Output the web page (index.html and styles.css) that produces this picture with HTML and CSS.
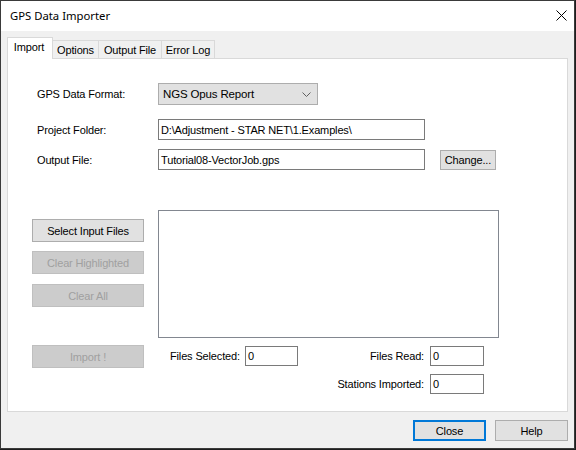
FILE: index.html
```html
<!DOCTYPE html>
<html>
<head>
<meta charset="utf-8">
<title>GPS Data Importer</title>
<link rel="stylesheet" href="styles.css">
</head>
<body>
<div class="window">
  <div class="titlebar">
    <span class="title">GPS Data Importer</span>
    <svg class="close-x" width="11" height="11" viewBox="0 0 11 11"><path d="M0.5 0.5 L10.5 10.5 M10.5 0.5 L0.5 10.5" stroke="#000" stroke-width="1" fill="none"/></svg>
  </div>
  <div class="client">
    <div class="tabs">
      <div class="tab selected">Import</div>
      <div class="tab t-options">Options</div>
      <div class="tab t-output">Output File</div>
      <div class="tab t-error">Error Log</div>
    </div>
    <div class="panel">
      <div class="form-top">
        <div class="row row1">
          <span class="label">GPS Data Format:</span>
          <div class="combo"><span>NGS Opus Report</span>
            <svg class="chev" width="9" height="5" viewBox="0 0 9 5"><path d="M0.5 0.5 L4.5 4.5 L8.5 0.5" stroke="#606060" stroke-width="1" fill="none"/></svg>
          </div>
        </div>
        <div class="row row2">
          <span class="label">Project Folder:</span>
          <div class="textbox wide">D:\Adjustment - STAR NET\1.Examples\</div>
        </div>
        <div class="row row3">
          <span class="label">Output File:</span>
          <div class="textbox wide">Tutorial08-VectorJob.gps</div>
          <div class="btn change">Change...</div>
        </div>
      </div>
      <div class="lower">
        <div class="side-buttons">
          <div class="btn side b1">Select Input Files</div>
          <div class="btn side disabled b2">Clear Highlighted</div>
          <div class="btn side disabled b3">Clear All</div>
        </div>
        <div class="listbox"></div>
      </div>
      <div class="stats">
        <div class="btn side disabled">Import !</div>
        <span class="label sel-label">Files Selected:</span>
        <div class="textbox small sel-box">0</div>
        <div class="counts">
          <span class="clabel">Files Read:</span>
          <div class="textbox small2">0</div>
          <span class="clabel">Stations Imported:</span>
          <div class="textbox small2">0</div>
        </div>
      </div>
    </div>
    <div class="footer">
      <div class="btn dlg default">Close</div>
      <div class="btn dlg">Help</div>
    </div>
  </div>
</div>
</body>
</html>
```
FILE: styles.css
```css
* { box-sizing: border-box; }
html, body { margin: 0; padding: 0; }
body {
  background: #1e1e1e;
  width: 576px;
  height: 450px;
  overflow: hidden;
  font-family: "Liberation Sans", Arial, sans-serif;
  font-size: 11px;
  letter-spacing: -0.15px;
  color: #000;
}
.window {
  width: 575px;
  height: 449px;
  border: 1px solid #3a3a3a;
  background: #f0f0f0;
  display: flex;
  flex-direction: column;
}
.titlebar {
  height: 30px;
  background: #fff;
  display: flex;
  align-items: center;
  padding-left: 9px;
  flex: none;
}
.title {
  font-family: "Noto Sans", "Open Sans", sans-serif;
  font-size: 11.3px;
  letter-spacing: 0;
  color: #000;
  flex: 1;
  position: relative;
  top: -1px;
}
.close-x { margin-right: 7px; margin-top: -1px; }
.client {
  flex: 1;
  padding: 6px 6px 0 6px;
  display: flex;
  flex-direction: column;
}
.tabs {
  height: 21px;
  display: flex;
  align-items: flex-end;
  flex: none;
}
.tab {
  height: 18px;
  border: 1px solid #d9d9d9;
  border-bottom: none;
  background: #f0f0f0;
  margin-left: -1px;
  display: flex;
  justify-content: center;
  padding-top: 3px;
  white-space: nowrap;
}
.tab.selected {
  margin-left: 0;
  width: 46px;
  height: 22px;
  margin-bottom: -1px;
  background: #fff;
  position: relative;
  z-index: 2;
  padding-top: 3px;
  padding-right: 2px;
}
.t-options { width: 47px; }
.t-output { width: 64px; }
.t-error { width: 54px; }
.panel {
  height: 354px;
  background: #fff;
  border: 1px solid #d9d9d9;
  flex: none;
}
.form-top { padding-left: 29px; }
.row { display: flex; align-items: center; }
.row1 { margin-top: 24px; height: 22px; }
.row2 { margin-top: 14px; height: 21px; }
.row3 { margin-top: 9px; height: 21px; }
.label { width: 121px; flex: none; white-space: nowrap; }
.combo {
  width: 160px;
  height: 22px;
  background: #e1e1e1;
  border: 1px solid #adadad;
  display: flex;
  align-items: center;
  justify-content: space-between;
  padding-left: 4px;
  padding-right: 6px;
  font-size: 11.5px;
}
.chev { margin-top: 1px; }
.textbox {
  border: 1px solid #7a7a7a;
  background: #fff;
  height: 21px;
  display: flex;
  align-items: center;
  padding-left: 2px;
  white-space: nowrap;
  overflow: hidden;
}
.textbox.wide { width: 267px; }
.btn {
  background: #e1e1e1;
  border: 1px solid #adadad;
  display: flex;
  align-items: center;
  justify-content: center;
  white-space: nowrap;
}
.btn.change { width: 56px; height: 20px; margin-left: 15px; margin-top: 1px; }
.lower {
  margin-top: 40px;
  display: flex;
  height: 128px;
}
.side-buttons {
  margin-left: 24px;
  width: 112px;
  padding-top: 9px;
  display: flex;
  flex-direction: column;
}
.btn.side { width: 112px; height: 23px; flex: none; }
.b2 { margin-top: 9px; }
.b3 { margin-top: 10px; }
.btn.disabled {
  background: #cccccc;
  border-color: #bfbfbf;
  color: #a0a0a0;
}
.listbox {
  margin-left: 14px;
  width: 341px;
  height: 128px;
  border: 1px solid #828790;
  background: #fff;
}
.stats {
  margin-top: 7px;
  display: flex;
  align-items: flex-start;
  padding-left: 24px;
}
.sel-label {
  width: 75px;
  margin-left: 26px;
  height: 20px;
  margin-top: 1px;
  display: flex;
  align-items: center;
}
.textbox.small { width: 53px; height: 20px; margin-top: 1px; }
.counts {
  margin-left: 43px;
  margin-top: 1px;
  display: grid;
  grid-template-columns: 89px 54px;
  grid-auto-rows: 20px;
  row-gap: 8px;
}
.clabel {
  display: flex;
  align-items: center;
  justify-content: flex-end;
  padding-right: 6px;
  white-space: nowrap;
}
.textbox.small2 { width: 54px; height: 20px; }
.footer {
  margin-top: 8px;
  display: flex;
  justify-content: flex-end;
  gap: 9px;
}
.btn.dlg { width: 73px; height: 21px; }
.btn.dlg.default { border: 2px solid #0078d7; }
```
